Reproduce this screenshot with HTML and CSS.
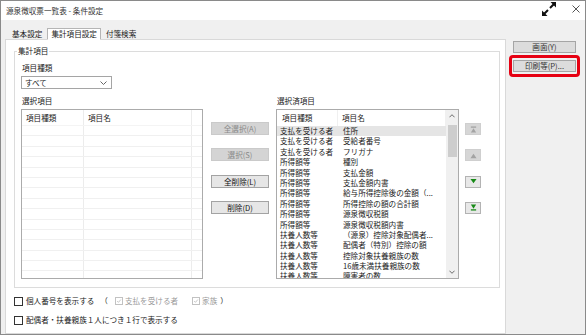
FILE: index.html
```html
<!DOCTYPE html>
<html lang="ja">
<head>
  <meta charset="UTF-8" />
  <title>源泉徴収票一覧表 - 条件設定</title>
  <link rel="stylesheet" href="styles.css">
</head>
<body>
<div class="window">
  <div class="titlebar">
    <span class="title">源泉徴収票一覧表 - 条件設定</span>
    <svg class="ico-expand" viewBox="0 0 16 16">
      <path d="M7 9 L3 13 M9 7 L13 3" stroke="#111" stroke-width="2" fill="none"/>
      <polygon points="1,15 1,9.5 6.5,15" fill="#111"/>
      <polygon points="15,1 9.5,1 15,6.5" fill="#111"/>
    </svg>
    <svg class="ico-close" viewBox="0 0 8 8">
      <path d="M0.5 0.5 L7.5 7.5 M7.5 0.5 L0.5 7.5" stroke="#555" stroke-width="1" fill="none"/>
    </svg>
  </div>

  <div class="main">
    <div class="content">
      <div class="tabs">
        <span class="tab">基本設定</span>
        <span class="tab active">集計項目設定</span>
        <span class="tab">付箋検索</span>
      </div>

      <div class="panel">
        <div class="group">
          <span class="legend">集計項目</span>

          <div class="label">項目種類</div>
          <div class="select">
            <span>すべて</span>
            <svg class="chev" viewBox="0 0 7 4"><path d="M0.5 0.5 L3.5 3.5 L6.5 0.5" stroke="#666" fill="none"/></svg>
          </div>

          <div class="lists">
            <div class="list-col">
              <div class="caption">選択項目</div>
              <div class="list list-left">
                <div class="grid">
                  <div class="row head"><span class="c1">項目種類</span><span class="c2">項目名</span><span class="c3"></span></div>
                  <div class="row"><span class="c1"></span><span class="c2"></span><span class="c3"></span></div>
                  <div class="row"><span class="c1"></span><span class="c2"></span><span class="c3"></span></div>
                  <div class="row"><span class="c1"></span><span class="c2"></span><span class="c3"></span></div>
                  <div class="row"><span class="c1"></span><span class="c2"></span><span class="c3"></span></div>
                  <div class="row"><span class="c1"></span><span class="c2"></span><span class="c3"></span></div>
                  <div class="row"><span class="c1"></span><span class="c2"></span><span class="c3"></span></div>
                  <div class="row"><span class="c1"></span><span class="c2"></span><span class="c3"></span></div>
                  <div class="row"><span class="c1"></span><span class="c2"></span><span class="c3"></span></div>
                  <div class="row"><span class="c1"></span><span class="c2"></span><span class="c3"></span></div>
                  <div class="row"><span class="c1"></span><span class="c2"></span><span class="c3"></span></div>
                  <div class="row"><span class="c1"></span><span class="c2"></span><span class="c3"></span></div>
                  <div class="row"><span class="c1"></span><span class="c2"></span><span class="c3"></span></div>
                  <div class="row"><span class="c1"></span><span class="c2"></span><span class="c3"></span></div>
                  <div class="row"><span class="c1"></span><span class="c2"></span><span class="c3"></span></div>
                  <div class="row"><span class="c1"></span><span class="c2"></span><span class="c3"></span></div>
                </div>
              </div>
            </div>

            <div class="mid-btns">
              <button class="btn off">全選択(A)</button>
              <button class="btn off">選択(S)</button>
              <button class="btn">全削除(L)</button>
              <button class="btn">削除(D)</button>
            </div>

            <div class="list-col">
              <div class="caption">選択済項目</div>
              <div class="list list-right">
                <div class="grid">
                  <div class="row head"><span class="c1">項目種類</span><span class="c2">項目名</span></div>
                  <div class="row sel"><span class="c1">支払を受ける者</span><span class="c2">住所</span></div>
                  <div class="row"><span class="c1">支払を受ける者</span><span class="c2">受給者番号</span></div>
                  <div class="row"><span class="c1">支払を受ける者</span><span class="c2">フリガナ</span></div>
                  <div class="row"><span class="c1">所得額等</span><span class="c2">種別</span></div>
                  <div class="row"><span class="c1">所得額等</span><span class="c2">支払金額</span></div>
                  <div class="row"><span class="c1">所得額等</span><span class="c2">支払金額内書</span></div>
                  <div class="row"><span class="c1">所得額等</span><span class="c2">給与所得控除後の金額（...</span></div>
                  <div class="row"><span class="c1">所得額等</span><span class="c2">所得控除の額の合計額</span></div>
                  <div class="row"><span class="c1">所得額等</span><span class="c2">源泉徴収税額</span></div>
                  <div class="row"><span class="c1">所得額等</span><span class="c2">源泉徴収税額内書</span></div>
                  <div class="row"><span class="c1">扶養人数等</span><span class="c2">（源泉）控除対象配偶者...</span></div>
                  <div class="row"><span class="c1">扶養人数等</span><span class="c2">配偶者（特別）控除の額</span></div>
                  <div class="row"><span class="c1">扶養人数等</span><span class="c2">控除対象扶養親族の数</span></div>
                  <div class="row"><span class="c1">扶養人数等</span><span class="c2">16歳未満扶養親族の数</span></div>
                  <div class="row"><span class="c1">扶養人数等</span><span class="c2">障害者の数</span></div>
                </div>
                <div class="scrollbar">
                  <svg class="sb-arrow" viewBox="0 0 7 4"><path d="M0.5 3.5 L3.5 0.5 L6.5 3.5" stroke="#555" fill="none"/></svg>
                  <div class="thumb"></div>
                  <div class="sb-fill"></div>
                  <svg class="sb-arrow" viewBox="0 0 7 4"><path d="M0.5 0.5 L3.5 3.5 L6.5 0.5" stroke="#555" fill="none"/></svg>
                </div>
              </div>
            </div>

            <div class="arrow-btns">
              <button class="abtn off">
                <svg viewBox="0 0 8 8"><rect x="1" y="0.5" width="6" height="1.5"/><polygon points="4,2.5 7,7.5 1,7.5"/></svg>
              </button>
              <button class="abtn off">
                <svg viewBox="0 0 8 8"><polygon points="4,2 7.5,7 0.5,7"/></svg>
              </button>
              <button class="abtn">
                <svg viewBox="0 0 8 8"><polygon points="0.5,1 7.5,1 4,6"/></svg>
              </button>
              <button class="abtn">
                <svg viewBox="0 0 8 8"><polygon points="1,0.5 7,0.5 4,5.5"/><rect x="1" y="6" width="6" height="1.5"/></svg>
              </button>
            </div>
          </div>
        </div>

        <div class="opts">
          <div class="opt">
            <span class="cb"></span>
            <span>個人番号を表示する</span>
            <span class="paren-l">（</span>
            <span class="cb cb-off"><svg viewBox="0 0 8 8"><path d="M1.5 4 L3.3 5.8 L6.5 2" stroke="#b5b5b5" fill="none"/></svg></span>
            <span class="dim">支払を受ける者</span>
            <span class="cb cb-off cb-gap"><svg viewBox="0 0 8 8"><path d="M1.5 4 L3.3 5.8 L6.5 2" stroke="#b5b5b5" fill="none"/></svg></span>
            <span class="dim">家族</span>
            <span class="paren-r">）</span>
          </div>
          <div class="opt">
            <span class="cb"></span>
            <span>配偶者・扶養親族１人につき１行で表示する</span>
          </div>
        </div>
      </div>
    </div>

    <div class="side">
      <button class="sbtn">画面(Y)</button>
      <div class="mark">
        <button class="sbtn">印刷等(P)...</button>
      </div>
    </div>
  </div>
</div>
</body>
</html>
```

FILE: styles.css
```css
* {
  box-sizing: border-box;
}

body {
  margin: 0;
  font-family: "Noto Sans CJK JP", "Noto Sans", sans-serif;
  font-size: 7.6px;
  color: #222;
}

.window {
  width: 586px;
  height: 335px;
  border: 1px solid #8a8a8a;
  background: #f0f0f0;
  display: flex;
  flex-direction: column;
}

.titlebar {
  height: 19px;
  flex: none;
  background: #fff;
  display: flex;
  align-items: center;
  padding-left: 5px;
}

.title {
  flex: 1;
  line-height: 12px;
  color: #333;
}

.ico-expand {
  width: 16px;
  height: 16px;
  margin-right: 15px;
  margin-top: -4px;
}

.ico-close {
  width: 8px;
  height: 8px;
  margin-right: 5px;
  margin-top: -3px;
}

.main {
  flex: 1;
  display: flex;
}

.content {
  width: 505px;
  padding-left: 4px;
  display: flex;
  flex-direction: column;
}

/* tabs */
.tabs {
  display: flex;
  margin-top: 8px;
  height: 12px;
  margin-bottom: -1px;
  padding-left: 4px;
}

.tab {
  line-height: 11px;
  padding: 0 3px;
  margin-right: 2px;
  color: #222;
}

.tab.active {
  background: #fff;
  border: 1px solid #b5b5b5;
  border-bottom: 1px solid #fff;
  line-height: 10px;
  position: relative;
  z-index: 1;
}

.panel {
  flex: 1;
  background: #fff;
  border: 1px solid #d9d9d9;
}

/* group box */
.group {
  position: relative;
  margin: 11px 5px 0 8px;
  height: 237px;
  border: 1px solid #dcdcdc;
  padding: 10px 0 0 6px;
}

.legend {
  position: absolute;
  top: -7px;
  left: 2px;
  padding: 0 1px;
  background: #fff;
  line-height: 12px;
}

.label {
  line-height: 12px;
  padding-left: 1px;
}

.select {
  margin-top: 2px;
  width: 91px;
  height: 13px;
  border: 1px solid #a5a5a5;
  display: flex;
  align-items: center;
  justify-content: space-between;
  padding: 0 4px 0 3px;
  line-height: 11px;
}

.chev {
  width: 7px;
  height: 4px;
}

.lists {
  display: flex;
  align-items: flex-start;
  margin-top: 6px;
}

.caption {
  line-height: 12px;
  padding-left: 1px;
}

.list {
  margin-top: 2px;
  height: 170px;
  border: 1px solid #ababab;
  background: #fff;
  overflow: hidden;
  display: flex;
}

.list-left {
  width: 182px;
}

.list-right {
  width: 183px;
}

.grid {
  flex: 1;
}

.row {
  display: flex;
  height: 10.4px;
  line-height: 10.4px;
  white-space: nowrap;
}

.row span {
  overflow: hidden;
  flex: none;
}

.row.head {
  height: 16px;
  line-height: 16px;
}

.list-left .row {
  border-bottom: 1px solid #f0f0f0;
}

.list-left .row.head {
  border-bottom: 1px solid #f4f4f4;
}

.list-left .c1 {
  width: 62px;
  padding-left: 4px;
  border-right: 1px solid #ececec;
}

.list-left .c2 {
  width: 108px;
  padding-left: 4px;
  border-right: 1px solid #ececec;
}

.list-left .c3 {
  width: 10px;
}

.list-right .c1 {
  width: 61px;
  padding-left: 3px;
}

.list-right .c2 {
  width: 108px;
  padding-left: 5px;
}

.list-right .head .c1 {
  padding-left: 5px;
}

.list-right .head .c2 {
  padding-left: 4px;
}

.list-right .head span {
  border-right: 1px solid #f0f0f0;
}

.row.sel {
  background: #e5e5e5;
}

.scrollbar {
  width: 12px;
  flex: none;
  background: #f0f0f0;
  display: flex;
  flex-direction: column;
  align-items: center;
}

.sb-arrow {
  width: 6px;
  height: 4px;
  margin: 4px 0;
}

.thumb {
  width: 9px;
  height: 32px;
  margin-top: 3px;
  background: #cdcdcd;
}

.sb-fill {
  flex: 1;
}

/* middle buttons */
.mid-btns {
  display: flex;
  flex-direction: column;
  gap: 13.3px;
  margin: 27px 7px 0 8px;
}

.btn {
  width: 58px;
  height: 13px;
  padding: 0;
  font: inherit;
  line-height: 11px;
  background: #e6e6e6;
  border: 1px solid #a3a3a3;
  color: #111;
}

.btn.off {
  background: #d4d4d4;
  border-color: #cacaca;
  color: #8a8a8a;
}

.arrow-btns {
  display: flex;
  flex-direction: column;
  gap: 14.3px;
  margin: 28px 0 0 6px;
}

.abtn {
  width: 16px;
  height: 12px;
  padding: 0;
  background: #e8e8e8;
  border: 1px solid #b3b3b3;
  display: flex;
  align-items: center;
  justify-content: center;
}

.abtn svg {
  width: 7px;
  height: 7px;
  fill: #178a17;
}

.abtn.off {
  background: #d6d6d6;
  border-color: #cfcfcf;
}

.abtn.off svg {
  fill: #a3a3a3;
}

/* bottom options */
.opts {
  padding-left: 8px;
}

.opt {
  display: flex;
  align-items: center;
  line-height: 12px;
  margin-top: 7px;
}

.cb {
  width: 9px;
  height: 9px;
  border: 1px solid #333;
  background: #fff;
  margin-right: 3px;
  flex: none;
}

.cb-off {
  width: 8px;
  height: 8px;
  border-color: #c2c2c2;
  margin-left: 7px;
  margin-right: 2px;
  display: flex;
}

.cb-off svg {
  width: 6px;
  height: 6px;
}

.cb-gap {
  margin-left: 14px;
}

.dim {
  color: #9a9a9a;
}

.paren-l {
  margin-left: 6px;
}

.paren-r {
  margin-left: 3px;
}

/* right side */
.side {
  flex: 1;
  padding-top: 21px;
}

.sbtn {
  display: block;
  width: 63px;
  height: 12px;
  padding: 0;
  font: inherit;
  line-height: 10px;
  background: #dcdcdc;
  border: 1px solid #a5a5a5;
  color: #333;
}

.side > .sbtn {
  margin-left: 7px;
}

.mark {
  margin: 2px 0 0 3px;
  width: 71px;
  border: 3px solid #e60012;
  border-radius: 4px;
  padding: 2px 1px;
}
```
